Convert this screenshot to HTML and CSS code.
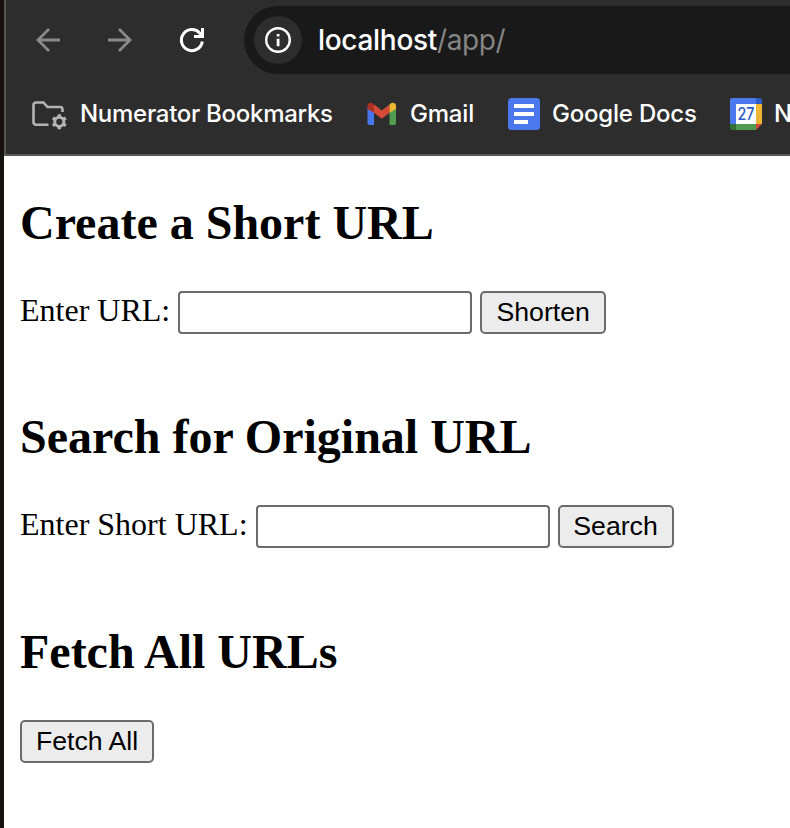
FILE: index.html
```html
<!DOCTYPE html>
<html lang="en">
<head>
<meta charset="utf-8">
<title>URL Shortener</title>
<link rel="stylesheet" href="styles.css">
</head>
<body>
<div class="window">
  <header class="chrome">
    <div class="nav">
      <svg class="nav-icon" width="24" height="24" viewBox="0 0 24 24" fill="none" stroke="#8a8a8a" stroke-width="2.8"><path d="M24 12H2M13 1L2 12l11 11"/></svg>
      <svg class="nav-icon" width="24" height="24" viewBox="0 0 24 24" fill="none" stroke="#8a8a8a" stroke-width="2.8"><path d="M0 12h22M11 1l11 11-11 11"/></svg>
      <svg class="nav-icon reload" width="24" height="24" viewBox="0 0 24 24" fill="none" stroke="#fff" stroke-width="3"><path d="M22.3 13.5A10.5 10.5 0 1 1 19.8 5.2L22.5 8M22.5 0v8.5H14"/></svg>
      <div class="address">
        <span class="site-info">
          <svg width="26" height="26" viewBox="0 0 26 26"><circle cx="13" cy="13" r="11.8" fill="none" stroke="#fff" stroke-width="2.4"/><path d="M11.7 11.8h2.8v7.4h-2.8zM11.7 7h2.8v2.6h-2.8z" fill="#fff"/></svg>
        </span>
        <span class="host">localhost</span><span class="path">/app/</span>
      </div>
    </div>
    <div class="bookmarks">
      <div class="bookmark folder">
        <svg width="36" height="26" viewBox="0 0 36 26" fill="none" stroke="#b4b4b4" stroke-width="2.6"><path d="M16.500 23.700H4a2.500 2.500 0 0 1-2.500-2.500V4A2.500 2.500 0 0 1 4 1.500h7.500l4 4.500H28a2.500 2.500 0 0 1 2.500 2.500V11"/><circle cx="27.300" cy="20.800" r="4.600" stroke-width="3"/><path stroke-width="3.400" d="M27.300 13.300v3M27.300 25.300v3M20.800 17l2.600 1.500M31.200 23.100l2.600 1.500M33.800 17l-2.600 1.500M23.400 23.100l-2.600 1.500"/></svg>
        <span>Numerator Bookmarks</span>
      </div>
      <div class="bookmark gmail">
        <svg width="30" height="22" viewBox="0 0 30 22"><path fill="#4877ec" d="M.5 4.500L7 9v13H2.200A1.700 1.700 0 0 1 .5 20.300z"/><path fill="#509b50" d="M29 4.500L22.500 9v13h4.800a1.700 1.700 0 0 0 1.700-1.700z"/><path fill="#d64b38" d="M7 1.400l7.800 6 7.700-6V9.700l-7.700 6L7 9.700z"/><path fill="#ad3025" d="M.5 6V3C.5.3 3.600-1 5.800.5L7 1.400v8.300z"/><path fill="#efb633" d="M29 6V3c0-2.700-3.100-4-5.300-2.500l-1.200.9v8.300z"/></svg>
        <span>Gmail</span>
      </div>
      <div class="bookmark docs">
        <svg width="32" height="32" viewBox="0 0 32 32"><rect width="32" height="32" rx="3.500" fill="#4b78ec"/><path fill="#fff" d="M6 6h20v4H6zM6 14h20v4H6zM6 22h14v4H6z"/></svg>
        <span>Google Docs</span>
      </div>
      <div class="bookmark calendar">
        <svg width="32" height="32" viewBox="0 0 32 32"><path fill="#4b78ec" d="M2 0h24v6H6v20H0V2a2 2 0 0 1 2-2z"/><path fill="#2d5bc6" d="M26 0h4a2 2 0 0 1 2 2v4h-6z"/><path fill="#efb633" d="M26 6h6v20h-6z"/><path fill="#509b50" d="M6 26h20v6H6z"/><path fill="#346f36" d="M0 26h6v6H2a2 2 0 0 1-2-2z"/><path fill="#d64b38" d="M26 26h6l-6 6z"/><path fill="#fff" d="M6 6h20v20H6z"/><text class="day" x="16" y="22" text-anchor="middle" textLength="17" lengthAdjust="spacingAndGlyphs">27</text></svg>
        <span>N</span>
      </div>
    </div>
  </header>
  <main class="page">
    <h2>Create a Short URL</h2>
    <form class="row">
      <label for="url">Enter URL:</label>
      <input id="url" type="text">
      <button class="shorten" type="button">Shorten</button>
    </form>
    <h2>Search for Original URL</h2>
    <form class="row">
      <label for="short">Enter Short URL:</label>
      <input id="short" type="text">
      <button class="search" type="button">Search</button>
    </form>
    <h2 class="last">Fetch All URLs</h2>
    <div class="row">
      <button class="fetch" type="button">Fetch All</button>
    </div>
  </main>
</div>
</body>
</html>
```
FILE: styles.css
```css
* { box-sizing: border-box; }
html, body { margin: 0; height: 100%; overflow: hidden; }
body { background: #fff; color: #000; }
svg { display: block; flex: none; overflow: visible; }

.window {
  height: 828px;
  border-left: 4px solid #14110e;
}

.chrome {
  height: 156px;
  padding-top: 6px;
  background: #2d2d2d;
  border-left: 2px solid #565455;
  border-bottom: 2px solid #5b585a;
  color: #fff;
  font-family: Inter, sans-serif;
  font-weight: 500;
  white-space: nowrap;
  overflow: hidden;
}

.nav {
  display: flex;
  align-items: center;
  height: 68px;
  padding-left: 30px;
}
.nav-icon { margin-right: 48px; }
.reload { margin-right: 40px; }

.address {
  display: flex;
  flex: 1;
  align-items: center;
  height: 68px;
  padding-left: 10px;
  border-radius: 34px 0 0 34px;
  background: #191919;
  font-size: 28px;
}
.site-info {
  display: grid;
  place-items: center;
  width: 48px;
  height: 48px;
  margin-right: 16px;
  border-radius: 50%;
  background: #2d2d2d;
}
.host { letter-spacing: -0.3px; }
.path { color: #858585; font-weight: 400; letter-spacing: -0.4px; }

.bookmarks {
  display: flex;
  height: 79px;
  padding-left: 26px;
  font-size: 24px;
  letter-spacing: -0.28px;
}
.bookmark { display: flex; flex: none; align-items: center; }
.bookmark svg { margin-top: 1px; }
.bookmark.gmail span { letter-spacing: -0.2px; }
.folder { width: 335px; gap: 12px; }
.gmail { width: 141px; gap: 13px; }
.docs { width: 222px; gap: 12px; letter-spacing: -0.2px; }
.calendar { gap: 12px; }
.day { font: 500 17px Inter, sans-serif; letter-spacing: 0; fill: #2d5bc6; }

.page {
  padding: 39px 16px 0;
  font: 32px/37px "Liberation Serif", serif;
}
h2 {
  margin: 0 0 41px;
  font-size: 48px;
  line-height: 55px;
}
.last { margin-top: 76px; }
.row {
  display: flex;
  align-items: center;
  height: 43px;
  margin: 0 0 75px;
}
label { margin-right: 8px; padding-bottom: 4px; }
input {
  width: 294px;
  height: 43px;
  margin: 0 8px 0 0;
  border: 2px solid #6b6b6b;
  border-radius: 4px;
  background: #fff;
}
button {
  height: 43px;
  padding: 0 0 1px;
  border: 2px solid #6b6b6b;
  border-radius: 5px;
  background: #ececec;
  color: #000;
  font: 26.67px "Liberation Sans", sans-serif;
}
.shorten { width: 126px; }
.search { width: 116px; }
.fetch { width: 134px; }
```
